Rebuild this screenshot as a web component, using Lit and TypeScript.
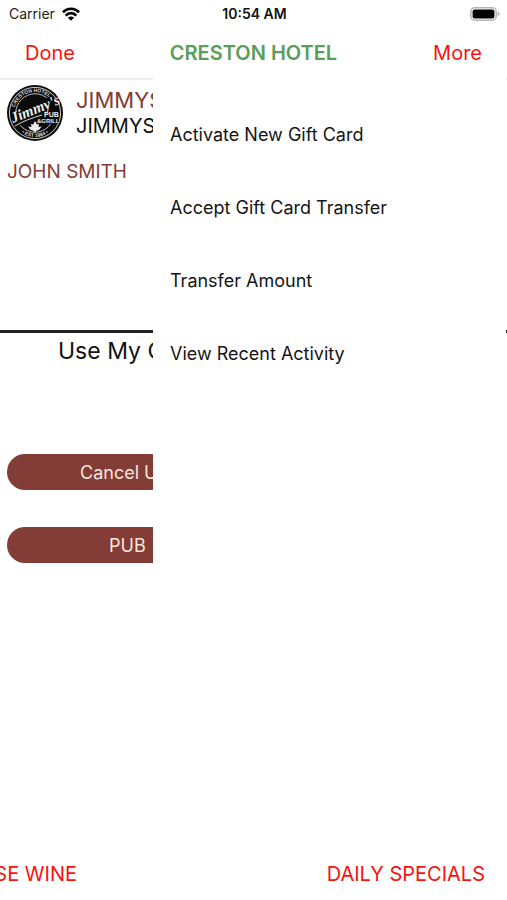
import { LitElement, html, css, svg } from "lit";
import { customElement } from "lit/decorators.js";

@customElement("status-bar")
class StatusBar extends LitElement {
  static styles = css`
    :host {
      display: grid;
      grid-template-columns: 1fr auto 1fr;
      align-items: center;
      height: 27px;
      padding: 0 7px 0 9px;
      font-size: 14px;
      color: #222;
    }
    .carrier {
      display: flex;
      align-items: center;
      gap: 7px;
    }
    .time {
      font-weight: 600;
      color: #111;
    }
    .battery {
      justify-self: end;
    }
    svg {
      display: block;
    }
  `;

  render() {
    return html`
      <div class="carrier">
        <span>Carrier</span>
        <svg width="18" height="14" viewBox="0 0 18 14" aria-hidden="true">
          <g fill="none" stroke="#000" stroke-width="2.7">
            <path d="M0.9 5.2C5.4 0.6 12.6 0.6 17.1 5.2" />
            <path d="M3.7 8.6C6.7 5.4 11.3 5.4 14.3 8.6" />
          </g>
          <path d="M9 13.8L5.9 10.8C7.6 9.2 10.4 9.2 12.1 10.8Z" />
        </svg>
      </div>
      <div class="time">10:54 AM</div>
      <svg class="battery" width="30" height="14" viewBox="0 0 30 14" aria-hidden="true">
        <rect x="0.8" y="0.8" width="25.4" height="12.4" rx="4" fill="#fff" stroke="#b4b4b4" stroke-width="1.5" />
        <rect x="2.6" y="2.6" width="21.8" height="8.8" rx="2" fill="#000" />
        <path d="M27.6 4.8C30.2 5.4 30.2 8.6 27.6 9.2Z" fill="#b4b4b4" />
      </svg>
    `;
  }
}

@customElement("pub-logo")
class PubLogo extends LitElement {
  static styles = css`
    :host {
      display: block;
    }
    svg {
      display: block;
    }
    .ring {
      font: 700 5px "Liberation Sans", sans-serif;
    }
    .script {
      font: italic 700 15px "Liberation Serif", serif;
    }
    .block {
      font: 700 7px "Liberation Sans", sans-serif;
    }
    .small {
      font: 700 6px "Liberation Sans", sans-serif;
    }
  `;

  render() {
    return html`<svg width="56" height="56" viewBox="0 0 56 56" role="img" aria-label="Jimmy's Pub &amp; Grill">
      ${svg`
        <defs>
          <path id="top" d="M7 28A21 21 0 0 1 49 28" />
          <path id="bottom" d="M4 28A24 24 0 0 0 52 28" />
        </defs>
        <circle cx="28" cy="28" r="28" fill="#0b0b0b" />
        <circle cx="28" cy="28" r="25.6" fill="none" stroke="#ccc" stroke-width="1" />
        <circle cx="28" cy="28" r="19.2" fill="none" stroke="#bbb" stroke-width="1" />
        <path d="M5 30L28 18L43 12L51 15L52 38L32 40L8 40Z" fill="#0b0b0b" />
        <g fill="#ddd" text-anchor="middle">
          <text class="ring"><textPath href="#top" startOffset="41%">CRESTON HOTEL</textPath></text>
          <text class="ring"><textPath href="#bottom" startOffset="50%">• EST 1984 •</textPath></text>
        </g>
        <g fill="#eee">
          <text class="script" x="6" y="38" transform="rotate(-22 6 38)">Jimmy's</text>
          <text class="block" x="37" y="32">PUB</text>
          <text class="small" x="30" y="38">&amp;GRILL</text>
          <path d="M28 36L30 39.5L32 39L31.6 42L34.5 41.5L32.5 44.5L29 46L28 48L27 46L23 44.5L21.2 41.5L24.4 42L24 39L26.2 39.5Z" />
        </g>
        <path d="M8 41C16 36 25 33 35 30" fill="none" stroke="#ddd" stroke-width="1" />
      `}
    </svg>`;
  }
}

@customElement("side-menu")
class SideMenu extends LitElement {
  static styles = css`
    :host {
      display: block;
      background: #fff;
    }
    ul {
      list-style: none;
      margin: 0;
      padding: 45px 17px 0;
      display: flex;
      flex-direction: column;
      gap: 49px;
    }
    button {
      display: block;
      border: 0;
      padding: 0;
      background: none;
      font: inherit;
      font-size: 18px;
      line-height: 24px;
      color: #151515;
      white-space: nowrap;
    }
  `;

  private items = [
    "Activate New Gift Card",
    "Accept Gift Card Transfer",
    "Transfer Amount",
    "View Recent Activity",
  ];

  render() {
    return html`<ul>
      ${this.items.map((item) => html`<li><button type="button">${item}</button></li>`)}
    </ul>`;
  }
}

@customElement("app-root")
class AppRoot extends LitElement {
  static styles = css`
    :host {
      display: flex;
      flex-direction: column;
      min-height: 100vh;
      overflow: hidden;
      background: #fff;
      font-family: Inter, "Liberation Sans", sans-serif;
      color: #111;
    }
    button {
      border: 0;
      padding: 0;
      background: none;
      font: inherit;
      color: inherit;
    }
    .nav {
      display: grid;
      grid-template-columns: 1fr auto 1fr;
      align-items: center;
      height: 51px;
      padding: 0 25px;
      font-size: 20px;
    }
    .nav button {
      color: #f8120f;
    }
    .done {
      justify-self: start;
    }
    .more {
      justify-self: end;
    }
    h1 {
      margin: 0;
      font-size: 20px;
      font-weight: 600;
      color: #5b9e5b;
    }
    .stage {
      position: relative;
      flex: 1;
      overflow: hidden;
      white-space: nowrap;
    }
    .page {
      border-top: 2px solid #eee;
    }
    .venue {
      display: flex;
      align-items: center;
      gap: 13px;
      padding: 5px 7px 0;
    }
    .venue p,
    .holder {
      margin: 0;
    }
    .brand {
      font-size: 22px;
      line-height: 26px;
      color: #843c36;
    }
    .place {
      font-size: 20px;
      line-height: 26px;
    }
    .holder {
      padding: 19px 7px 0;
      font-size: 19px;
      line-height: 24px;
      color: #843c36;
    }
    .use {
      margin-top: 146px;
      border-top: 3px solid #222;
      padding-left: 58px;
    }
    h2 {
      margin: 0;
      font-size: 23px;
      line-height: 36px;
      font-weight: 400;
    }
    .actions {
      display: flex;
      flex-direction: column;
      gap: 37px;
      padding: 85px 7px 0;
    }
    .actions button {
      height: 36px;
      border-radius: 18px;
      background: #843c36;
      color: #f8e6dc;
      font-size: 18px;
      text-align: left;
    }
    .actions .cancel {
      padding-left: 73px;
    }
    .actions .pub {
      padding-left: 102px;
    }
    .menu {
      position: absolute;
      inset: 0 1px 0 153px;
    }
    .links {
      display: flex;
      justify-content: space-between;
      align-items: center;
      height: 52px;
      padding-right: 22px;
      font-size: 20px;
      white-space: nowrap;
    }
    .links a {
      color: #f8120f;
      text-decoration: none;
    }
    .leaving {
      display: flex;
      justify-content: flex-end;
      width: 77px;
    }
  `;

  render() {
    return html`
      <status-bar></status-bar>
      <header class="nav">
        <button class="done" type="button">Done</button>
        <h1>CRESTON HOTEL</h1>
        <button class="more" type="button">More</button>
      </header>
      <main class="stage">
        <div class="page">
          <div class="venue">
            <pub-logo></pub-logo>
            <div>
              <p class="brand">JIMMYS</p>
              <p class="place">JIMMYS</p>
            </div>
          </div>
          <p class="holder">JOHN SMITH</p>
          <section class="use"><h2>Use My C</h2></section>
          <div class="actions">
            <button class="cancel" type="button">Cancel Use</button>
            <button class="pub" type="button">PUB</button>
          </div>
        </div>
        <side-menu class="menu"></side-menu>
      </main>
      <footer class="links">
        <div class="leaving"><a href="#wine">HOUSE WINE</a></div>
        <a href="#specials">DAILY SPECIALS</a>
      </footer>
    `;
  }
}
